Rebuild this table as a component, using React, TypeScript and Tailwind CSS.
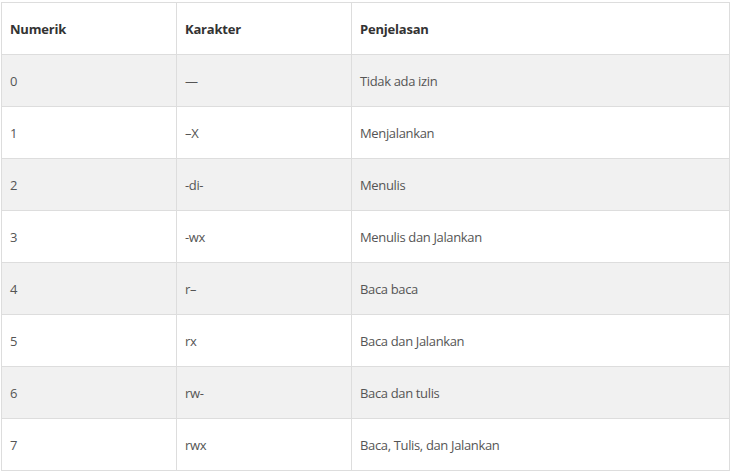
const rows = [
  ["0", "—", "Tidak ada izin"],
  ["1", "–X", "Menjalankan"],
  ["2", "-di-", "Menulis"],
  ["3", "-wx", "Menulis dan Jalankan"],
  ["4", "r–", "Baca baca"],
  ["5", "rx", "Baca dan Jalankan"],
  ["6", "rw-", "Baca dan tulis"],
  ["7", "rwx", "Baca, Tulis, dan Jalankan"],
]

export default function App() {
  return (
    <div className="h-[475px] w-[731px] bg-white pl-px pt-[2px] font-['Open_Sans',sans-serif] text-[13px]">
      <table className="w-[729px] table-fixed border-collapse border border-[#dddddd]">
        <colgroup>
          <col className="w-[175px]" />
          <col className="w-[175px]" />
          <col />
        </colgroup>
        <thead>
          <tr className="h-[52px]">
            {["Numerik", "Karakter", "Penjelasan"].map((h) => (
              <th
                key={h}
                className="border border-[#dddddd] px-2 pt-[2px] text-left font-bold tracking-[-0.2px] text-[#333333]"
              >
                {h}
              </th>
            ))}
          </tr>
        </thead>
        <tbody>
          {rows.map((r, i) => (
            <tr key={r[0]} className={`h-[52px] ${i % 2 === 0 ? "bg-[#f1f1f1]" : "bg-white"}`}>
              {r.map((c, j) => (
                <td key={j} className="border border-[#dddddd] px-2 pt-[2px] tracking-[-0.35px] text-[#555555]">
                  {c}
                </td>
              ))}
            </tr>
          ))}
        </tbody>
      </table>
    </div>
  )
}
